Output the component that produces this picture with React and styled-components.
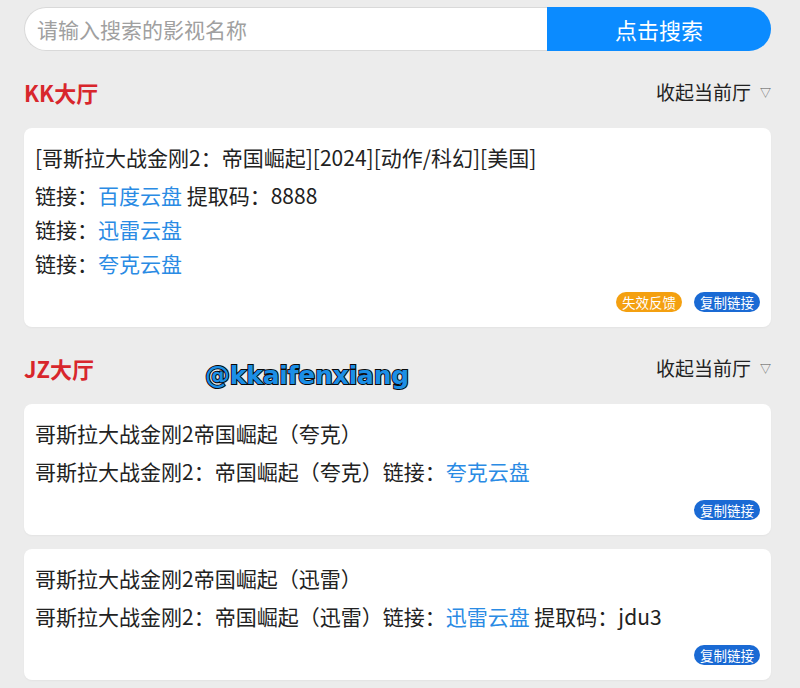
import React from "react";
import styled, { createGlobalStyle } from "styled-components";

const Global = createGlobalStyle`
  html, body { margin: 0; padding: 0; background: #ececec; }
  body { font-family: "Noto Sans CJK SC", "Noto Sans", sans-serif; color: #222; }
`;

const Page = styled.div`
  position: relative;
  padding: 7px 29px 0 24px;
  height: 688px;
  box-sizing: border-box;
  overflow: hidden;
`;

const SearchBar = styled.div`
  display: flex;
  height: 44px;
`;

const SearchInput = styled.input`
  flex: 1;
  min-width: 0;
  box-sizing: border-box;
  height: 44px;
  border: 1px solid #d9d9d9;
  border-right: none;
  border-radius: 22px 0 0 22px;
  background: #fff;
  padding: 0 12px;
  font-family: inherit;
  font-size: 21px;
  outline: none;
  &::placeholder { color: #a0a0a0; }
`;

const SearchButton = styled.button`
  width: 224px;
  height: 44px;
  border: none;
  border-radius: 0 22px 22px 0;
  background: #0b8bff;
  color: #fff;
  font-family: inherit;
  font-size: 22px;
  padding: 0;
`;

const Section = styled.section`
  margin-top: 21px;
`;

const HallHeader = styled.div`
  display: flex;
  align-items: center;
  justify-content: space-between;
  height: 40px;
  margin-bottom: 16px;
`;

const HallTitle = styled.div`
  color: #d8262c;
  font-weight: 700;
  font-size: 22px;
`;

const Collapse = styled.div`
  display: flex;
  align-items: center;
  font-size: 19px;
  color: #222;
  margin-top: -2px;
`;

const Arrow = styled.span`
  font-size: 11px;
  color: #555;
  margin-left: 9px;
  margin-top: 2px;
`;

const Card = styled.div`
  background: #fff;
  border-radius: 8px;
  padding: 12px 11px 15px 11px;
  margin-bottom: 14px;
  box-shadow: 0 1px 2px rgba(0, 0, 0, 0.04);
`;

const Title = styled.div`
  font-size: 21px;
  line-height: 34px;
  margin-bottom: 4px;
  white-space: nowrap;
`;

const Line = styled.div`
  font-size: 21px;
  line-height: 34px;
  white-space: nowrap;
`;

const Link = styled.span`
  color: #2a8be4;
`;

const Actions = styled.div`
  display: flex;
  justify-content: flex-end;
  gap: 12px;
  margin-top: 12px;
`;

const Badge = styled.span`
  display: inline-flex;
  align-items: center;
  justify-content: center;
  height: 20px;
  padding: 0 6px;
  border-radius: 10px;
  font-size: 13.5px;
  color: #fff;
  background: ${(p) => (p.$tone === "warn" ? "#f4a010" : "#1a6ad4")};
`;

const Watermark = styled.div`
  position: absolute;
  left: 205px;
  top: 361px;
  font-family: "DejaVu Sans", sans-serif;
  font-weight: 700;
  font-size: 25px;
  letter-spacing: -0.2px;
  color: #1c8fe6;
  -webkit-text-stroke: 2px #0a0a0a;
  paint-order: stroke fill;
`;

const halls = [
  {
    name: "KK大厅",
    items: [
      {
        title: "[哥斯拉大战金刚2：帝国崛起][2024][动作/科幻][美国]",
        lines: [
          { pre: "链接：", link: "百度云盘", post: " 提取码：8888" },
          { pre: "链接：", link: "迅雷云盘" },
          { pre: "链接：", link: "夸克云盘" },
        ],
        feedback: true,
      },
    ],
  },
  {
    name: "JZ大厅",
    items: [
      {
        title: "哥斯拉大战金刚2帝国崛起（夸克）",
        lines: [{ pre: "哥斯拉大战金刚2：帝国崛起（夸克）链接：", link: "夸克云盘" }],
      },
      {
        title: "哥斯拉大战金刚2帝国崛起（迅雷）",
        lines: [
          { pre: "哥斯拉大战金刚2：帝国崛起（迅雷）链接：", link: "迅雷云盘", post: " 提取码：jdu3" },
        ],
      },
    ],
  },
];

export default function App() {
  return (
    <>
      <Global />
      <Page>
        <SearchBar>
          <SearchInput placeholder="请输入搜索的影视名称" />
          <SearchButton>点击搜索</SearchButton>
        </SearchBar>
        {halls.map((h) => (
          <Section key={h.name}>
            <HallHeader>
              <HallTitle>{h.name}</HallTitle>
              <Collapse>
                收起当前厅<Arrow>▽</Arrow>
              </Collapse>
            </HallHeader>
            {h.items.map((it, i) => (
              <Card key={i}>
                <Title>{it.title}</Title>
                {it.lines.map((l, j) => (
                  <Line key={j}>
                    {l.pre}
                    <Link>{l.link}</Link>
                    {l.post}
                  </Line>
                ))}
                <Actions>
                  {it.feedback && <Badge $tone="warn">失效反馈</Badge>}
                  <Badge>复制链接</Badge>
                </Actions>
              </Card>
            ))}
          </Section>
        ))}
        <Watermark>@kkaifenxiang</Watermark>
      </Page>
    </>
  );
}
